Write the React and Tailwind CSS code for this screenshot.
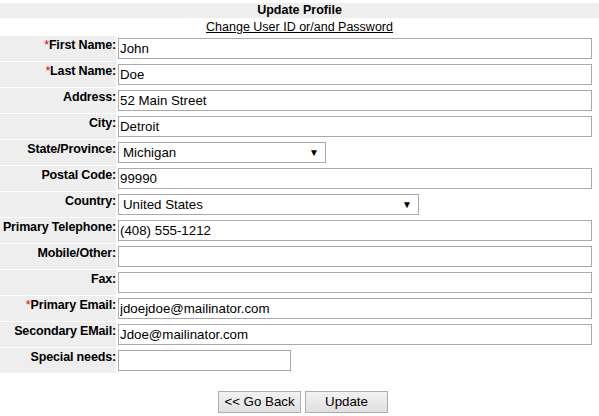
import React from 'react';

const rows = [
  { label: 'First Name:', value: 'John', required: true },
  { label: 'Last Name:', value: 'Doe', required: true },
  { label: 'Address:', value: '52 Main Street' },
  { label: 'City:', value: 'Detroit' },
  { label: 'State/Province:', value: 'Michigan', select: 'w-[208px]' },
  { label: 'Postal Code:', value: '99990' },
  { label: 'Country:', value: 'United States', select: 'w-[301px]' },
  { label: 'Primary Telephone:', value: '(408) 555-1212' },
  { label: 'Mobile/Other:', value: '' },
  { label: 'Fax:', value: '' },
  { label: 'Primary Email:', value: 'jdoejdoe@mailinator.com', required: true },
  { label: 'Secondary EMail:', value: 'Jdoe@mailinator.com' },
  { label: 'Special needs:', value: '', short: true },
];

const Field = ({ row }) => {
  if (row.select) {
    return (
      <div className={`${row.select} h-[21px] mt-[2px] border border-[#a9a9a9] bg-white flex items-center justify-between pl-[4px] pr-[6px] text-[13.3px] text-black`}>
        <span>{row.value}</span>
        <span className="text-[10px] leading-none">▼</span>
      </div>
    );
  }
  return (
    <input
      readOnly
      value={row.value}
      className={`${row.short ? 'w-[173px]' : 'w-[474px]'} h-[21px] mt-[2px] border border-[#a9a9a9] bg-white px-[1px] text-[13.3px] text-black outline-none`}
    />
  );
};

const App = () => {
  return (
    <div className="w-[599px] h-[416px] bg-white pt-[3px] font-['Liberation_Sans',Arial,sans-serif] text-black">
      <div className="h-[15px] bg-[#eeeeee] text-center text-[12.5px] font-bold leading-[15px]">Update Profile</div>
      <div className="h-[18px] text-center text-[12.5px] leading-[18px]">
        <a href="#" className="underline text-black">Change User ID or/and Password</a>
      </div>
      <div className="grid grid-cols-[116px_1fr] gap-px">
        {rows.map((row) => (
          <React.Fragment key={row.label}>
            <div className="h-[25px] bg-[#eeeeee] text-right text-[12.5px] tracking-[-0.15px] font-bold leading-[15px] pt-[2px] whitespace-nowrap">
              {row.required && <span className="text-[#e00000] font-normal">*</span>}
              {row.label}
            </div>
            <div className="h-[25px] bg-white pl-px">
              <Field row={row} />
            </div>
          </React.Fragment>
        ))}
      </div>
      <div className="flex gap-[4px] ml-[218px] mt-[18px]">
        <button className="w-[83px] h-[22px] border border-[#adadad] bg-gradient-to-b from-[#f2f2f2] to-[#e0e0e0] text-[13.3px] leading-none">&lt;&lt; Go Back</button>
        <button className="w-[83px] h-[22px] border border-[#adadad] bg-gradient-to-b from-[#f2f2f2] to-[#e0e0e0] text-[13.3px] leading-none">Update</button>
      </div>
    </div>
  );
};

export default App;
